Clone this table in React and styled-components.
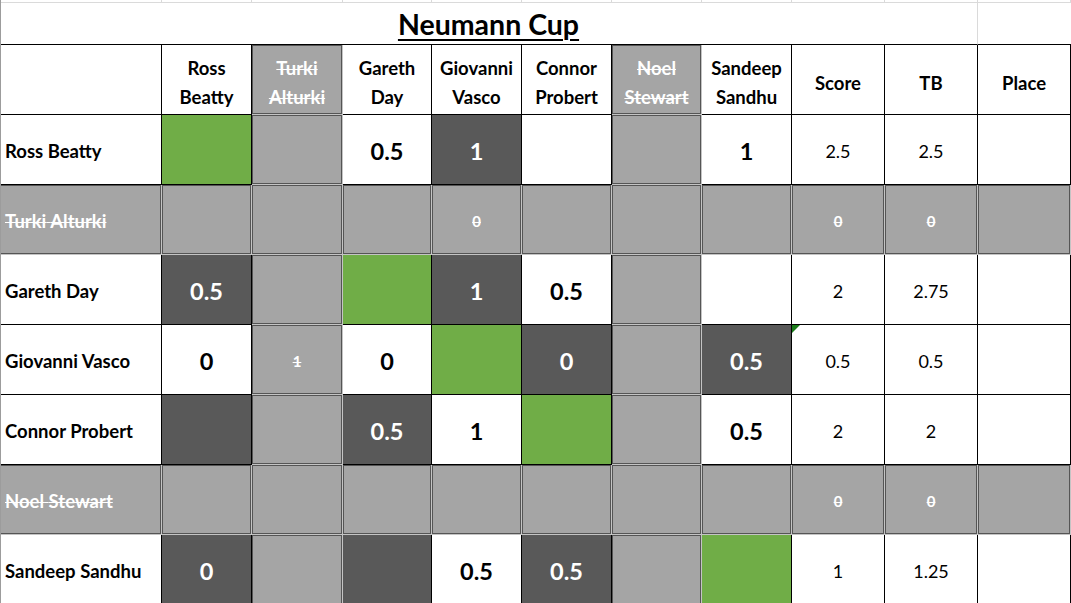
import React from "react";
import styled, { createGlobalStyle, css } from "styled-components";

const players = [
  { first: "Ross", last: "Beatty", out: false },
  { first: "Turki", last: "Alturki", out: true },
  { first: "Gareth", last: "Day", out: false },
  { first: "Giovanni", last: "Vasco", out: false },
  { first: "Connor", last: "Probert", out: false },
  { first: "Noel", last: "Stewart", out: true },
  { first: "Sandeep", last: "Sandhu", out: false },
];

// w = white, d = dark, g = green (own cell), x = withdrawn
const results = [
  { cells: [["g"], ["x"], ["w", "0.5"], ["d", "1"], ["w"], ["x"], ["w", "1"]], score: "2.5", tb: "2.5" },
  { cells: [["x"], ["x"], ["x"], ["x", "0"], ["x"], ["x"], ["x"]], score: "0", tb: "0" },
  { cells: [["d", "0.5"], ["x"], ["g"], ["d", "1"], ["w", "0.5"], ["x"], ["w"]], score: "2", tb: "2.75" },
  { cells: [["w", "0"], ["x", "1"], ["w", "0"], ["g"], ["d", "0"], ["x"], ["d", "0.5"]], score: "0.5", tb: "0.5", flag: true },
  { cells: [["d"], ["x"], ["d", "0.5"], ["w", "1"], ["g"], ["x"], ["w", "0.5"]], score: "2", tb: "2" },
  { cells: [["x"], ["x"], ["x"], ["x"], ["x"], ["x"], ["x"]], score: "0", tb: "0" },
  { cells: [["d", "0"], ["x"], ["d"], ["w", "0.5"], ["d", "0.5"], ["x"], ["g"]], score: "1", tb: "1.25" },
];

const App = () => {
  return (
    <>
      <GlobalStyle />
      <Sheet>
        {Array.from({ length: 11 }).map((_, i) => (
          <StubCell key={"s" + i} />
        ))}
        <TitleCell>
          <TitleText>Neumann Cup</TitleText>
        </TitleCell>
        <PlaceTitle />

        <HeadCell />
        {players.map((p) => (
          <HeadCell key={p.first} $out={p.out}>
            <span>{p.first}</span>
            <span>{p.last}</span>
          </HeadCell>
        ))}
        <HeadCell>Score</HeadCell>
        <HeadCell>TB</HeadCell>
        <HeadCell>Place</HeadCell>

        {results.map((row, r) => {
          const p = players[r];
          return (
            <React.Fragment key={p.first}>
              <NameCell $out={p.out}>
                {p.first} {p.last}
              </NameCell>
              {row.cells.map(([tone, value], c) => (
                <MatchCell key={c} $tone={p.out ? "x" : tone}>
                  {value}
                </MatchCell>
              ))}
              <StatCell $out={p.out} $flag={row.flag}>
                {row.score}
              </StatCell>
              <StatCell $out={p.out}>{row.tb}</StatCell>
              <StatCell $out={p.out} />
            </React.Fragment>
          );
        })}
      </Sheet>
    </>
  );
};

export default App;

const GlobalStyle = createGlobalStyle`
  html, body {
    margin: 0;
    padding: 0;
    background: #ffffff;
    overflow: hidden;
  }
  body {
    font-family: Lato, "Open Sans", sans-serif;
    color: #000;
  }
`;

const Sheet = styled.div`
  display: grid;
  grid-template-columns: 162px 90px 91px 89px 90px 90px 90px 90px 93px 93px 93px;
  grid-template-rows: 3px 42px repeat(8, 70px);
  width: 1071px;
  height: 603px;
  overflow: hidden;
  position: relative;

  &:before {
    content: "";
    position: absolute;
    left: 0;
    top: 0;
    bottom: 0;
    width: 1px;
    background: #9c9c9c;
    z-index: 2;
  }
`;

const StubCell = styled.div`
  border-right: 1px solid #dadada;
  border-bottom: 1px solid #dadada;
`;

const TitleCell = styled.div`
  grid-column: 1 / 11;
  border-right: 1px solid #dadada;
  border-bottom: 1px solid #000;
  display: flex;
  align-items: center;
  justify-content: center;
  padding-top: 1px;
`;

const TitleText = styled.span`
  font-size: 28.5px;
  font-weight: 700;
  text-decoration: underline;
  text-decoration-thickness: 2px;
  text-underline-offset: 4px;
`;

const PlaceTitle = styled.div`
  border-bottom: 1px solid #000;
`;

const grayBox = css`
  background: #a5a5a5;
  color: #ffffff;
  border-right: 1px solid #c4c4c4;
  border-bottom: 1px solid #c4c4c4;
  box-shadow: inset 1px 1px 0 #555555, inset -1px -1px 0 #555555;
  text-decoration: line-through;
  text-decoration-thickness: 1px;
`;

const HeadCell = styled.div`
  display: flex;
  flex-direction: column;
  align-items: center;
  justify-content: center;
  padding-top: 7px;
  font-size: 18.5px;
  font-weight: 700;
  line-height: 29px;
  text-align: center;
  border-right: 1px solid #000;
  border-bottom: 1px solid #000;
  ${(p) => p.$out && grayBox}
`;

const NameCell = styled.div`
  display: flex;
  align-items: center;
  padding: 3px 0 0 5px;
  font-size: 18.5px;
  font-weight: 700;
  border-right: 1px solid #000;
  border-bottom: 1px solid #000;
  ${(p) => p.$out && grayBox}
`;

const tones = {
  w: css`
    background: #ffffff;
    color: #000;
  `,
  d: css`
    background: #595959;
    color: #ffffff;
  `,
  g: css`
    background: #70ad47;
  `,
  x: css`
    ${grayBox};
    font-size: 15px;
  `,
};

const MatchCell = styled.div`
  display: flex;
  align-items: center;
  justify-content: center;
  padding-top: 2px;
  font-size: 23.5px;
  font-weight: 700;
  border-right: 1px solid #000;
  border-bottom: 1px solid #000;
  ${(p) => tones[p.$tone]}
`;

const StatCell = styled.div`
  position: relative;
  display: flex;
  align-items: center;
  justify-content: center;
  padding-top: 2px;
  font-size: 18px;
  border-right: 1px solid #000;
  border-bottom: 1px solid #000;
  ${(p) =>
    p.$out &&
    css`
      ${grayBox};
      font-size: 15px;
      font-weight: 700;
    `}
  ${(p) =>
    p.$flag &&
    css`
      &:after {
        content: "";
        position: absolute;
        top: 0;
        left: 0;
        border-top: 8px solid #1b7d1b;
        border-right: 8px solid transparent;
      }
    `}
`;
